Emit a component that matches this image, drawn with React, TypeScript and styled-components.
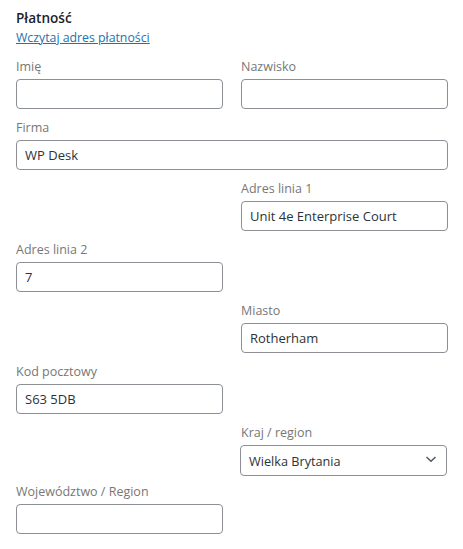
import React from "react";
import styled, { createGlobalStyle } from "styled-components";

const GlobalStyle = createGlobalStyle`
  html, body { margin: 0; padding: 0; background: #ffffff; }
  body {
    font-family: "Open Sans", "Noto Sans", Arial, sans-serif;
    font-size: 13px;
    color: #3c434a;
  }
  * { box-sizing: border-box; }
`;

const Panel = styled.div`
  width: 463px;
  padding: 8px 15px 16px 16px;
`;

const Heading = styled.h3`
  margin: 0;
  font-size: 13.6px;
  line-height: 20px;
  font-weight: 600;
  color: #1d2327;
`;

const LoadLink = styled.a`
  display: inline-block;
  font-size: 12.3px;
  line-height: 18px;
  margin-top: 1px;
  color: #2271b1;
  text-decoration: underline;
  cursor: pointer;
`;

const FieldGrid = styled.div`
  display: grid;
  grid-template-columns: 207px 207px;
  column-gap: 18px;
  row-gap: 10px;
  margin-top: 11px;
`;

type Col = "left" | "right" | "full";

const Field = styled.div<{ $col: Col; $row: number }>`
  display: flex;
  flex-direction: column;
  gap: 3px;
  grid-row: ${(p) => p.$row};
  grid-column: ${(p) => (p.$col === "full" ? "1 / 3" : p.$col === "left" ? "1" : "2")};
`;

const Label = styled.label`
  font-size: 12.5px;
  line-height: 18px;
  color: #777777;
`;

const TextInput = styled.input`
  height: 30px;
  width: 100%;
  padding: 0 8px;
  border: 1px solid #8c8f94;
  border-radius: 4px;
  font-family: inherit;
  font-size: 13px;
  color: #2c3338;
  background: #ffffff;
  outline: none;
`;

const SelectBox = styled.div`
  position: relative;
  height: 31px;
  margin: 0 1px -3px -1px;
  display: flex;
  align-items: center;
  padding: 0 24px 0 8px;
  border: 1px solid #8c8f94;
  border-radius: 4px;
  font-size: 12.7px;
  color: #2c3338;
  background: #ffffff;
`;

const Chevron = styled.svg`
  position: absolute;
  right: 9px;
  top: 8px;
`;

type FieldDef = { label: string; value: string; col: Col; row: number; select?: boolean };

const fields: FieldDef[] = [
  { label: "Imię", value: "", col: "left", row: 1 },
  { label: "Nazwisko", value: "", col: "right", row: 1 },
  { label: "Firma", value: "WP Desk", col: "full", row: 2 },
  { label: "Adres linia 1", value: "Unit 4e Enterprise Court", col: "right", row: 3 },
  { label: "Adres linia 2", value: "7", col: "left", row: 4 },
  { label: "Miasto", value: "Rotherham", col: "right", row: 5 },
  { label: "Kod pocztowy", value: "S63 5DB", col: "left", row: 6 },
  { label: "Kraj / region", value: "Wielka Brytania", col: "right", row: 7, select: true },
  { label: "Województwo / Region", value: "", col: "left", row: 8 },
];

export default function App() {
  return (
    <Panel>
      <GlobalStyle />
      <Heading>Płatność</Heading>
      <LoadLink>Wczytaj adres płatności</LoadLink>
      <FieldGrid>
        {fields.map((f) => (
          <Field key={f.label} $col={f.col} $row={f.row}>
            <Label>{f.label}</Label>
            {f.select ? (
              <SelectBox>
                {f.value}
                <Chevron width="12" height="10" viewBox="0 0 12 10">
                  <path d="M1.5 3 L6 7.3 L10.5 3" fill="none" stroke="#50575e" strokeWidth="1.4" />
                </Chevron>
              </SelectBox>
            ) : (
              <TextInput defaultValue={f.value} readOnly />
            )}
          </Field>
        ))}
      </FieldGrid>
    </Panel>
  );
}
